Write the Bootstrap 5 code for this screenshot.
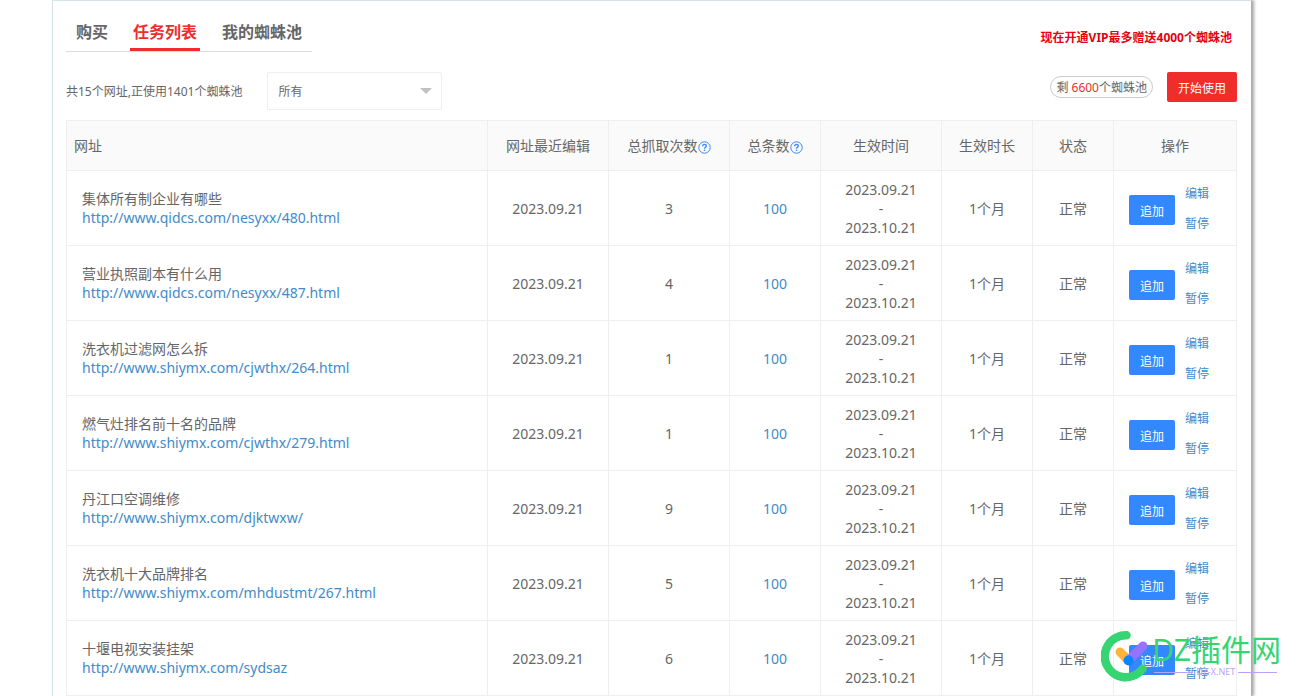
<!DOCTYPE html>
<html lang="zh-CN">
<head>
<meta charset="utf-8">
<meta name="viewport" content="width=device-width, initial-scale=1">
<title>任务列表</title>
<link href="https://cdn.jsdelivr.net/npm/bootstrap@5.3.0/dist/css/bootstrap.min.css" rel="stylesheet">
<style>
body{font-family:"Noto Sans","Noto Sans CJK SC",sans-serif;font-size:14px;line-height:19px;color:#666;background:#fff}
a{color:#428bca;text-decoration:none}
.panel{margin:0 47px 0 52px;padding:16px 14px 0 13px;min-height:100vh;border:1px solid #d7e3ea;border-right-color:#a8adb0;border-bottom:0;box-shadow:2px 0 3px rgba(0,0,0,.35)}
.tabs{border-bottom:1px solid #ddd;padding:0 7px;gap:19px}
.tabs .nav-link{color:#666;font-size:16px;font-weight:700;line-height:31px;padding:0 3px;border-bottom:3px solid transparent}
.tabs .nav-link.active{color:#ef2d2d;border-color:#ef2d2d}
.promo{font-size:12px;font-weight:700;color:#e60012;margin:11px 5px 0 0}
.tools{margin-top:20px;height:38px}
.tools,.tools .form-select{font-size:12px}
.tools .form-select{width:175px;height:38px;margin-left:25px;padding:1px 10px 0;color:#666;border:1px solid #eee;border-radius:2px;background:#fff url("data:image/svg+xml,%3Csvg xmlns='http://www.w3.org/2000/svg' viewBox='0 0 12 6'%3E%3Cpath fill='%23c2c2c2' d='M0 0h12L6 6z'/%3E%3C/svg%3E") no-repeat right 9px center/12px 6px}
.remain{border:1px solid #ccc;border-radius:11px;height:22px;line-height:22px;padding:0 5px;margin-right:14px}
.remain span{color:#ef2d2d}
.btn-start,.btn-add{height:30px;padding:3px 10px 0;font-size:12px;line-height:27px;color:#fff;border:0;border-radius:2px}
.btn-start,.btn-start:hover{background:#ef2d2d;color:#fff;width:70px}
.btn-add,.btn-add:hover{background:#38f;color:#fff;width:46px}
.tasks{table-layout:fixed;margin:10px 0 0;color:#666;border-color:#eee;border-collapse:collapse;text-align:center;vertical-align:middle;--bs-table-color:#666;--bs-table-bg:#fff}
.tasks th,.tasks td{padding:0;border:1px solid #eee;vertical-align:middle}
.tasks th{height:50px;background:#fafafa;font-weight:400}
.tasks td{height:75px}
.tasks th:first-child{text-align:left;padding-left:7px}
.tasks td:first-child{text-align:left;padding-left:15px}
.tasks td:first-child a{display:block}
.w-date{width:121px}.w-num{width:91px}.w-state{width:81px}.w-act{width:123px}
.help{width:13px;height:13px;vertical-align:-3px}
.acts{gap:10px;padding-left:15px}
.acts .btn-add{margin-top:3px}
.acts div{font-size:12px;gap:11px}
.stamp{position:absolute;right:18px;top:630px;pointer-events:none}
.stamp svg{width:48px;height:52px}
.stamp-name{font-size:30px;line-height:40px;color:#36d572;margin-left:3px}
.stamp-sub{font-size:9px;line-height:10px;color:#b9a2fb;gap:3px;margin-left:5px;margin-top:-3px}
.stamp-sub i{height:1px;background:#b9a2fb;width:39px}
</style>
</head>
<body>
<main class="panel">
  <header class="d-flex justify-content-between align-items-start">
    <nav class="tabs d-flex">
      <a class="nav-link" href="#">购买</a>
      <a class="nav-link active" href="#" aria-current="page">任务列表</a>
      <a class="nav-link" href="#">我的蜘蛛池</a>
    </nav>
    <div class="promo">现在开通VIP最多赠送4000个蜘蛛池</div>
  </header>
  <div class="tools d-flex align-items-center">
    <label for="scope">共15个网址,正使用1401个蜘蛛池</label>
    <select id="scope" class="form-select"><option>所有</option></select>
    <div class="d-flex align-items-center ms-auto align-self-start">
      <div class="remain">剩 <span>6600</span>个蜘蛛池</div>
      <button type="button" class="btn btn-start">开始使用</button>
    </div>
  </div>
  <table class="table tasks">
    <colgroup><col><col class="w-date"><col class="w-date"><col class="w-num"><col class="w-date"><col class="w-num"><col class="w-state"><col class="w-act"></colgroup>
    <thead>
      <tr>
        <th scope="col">网址</th><th scope="col">网址最近编辑</th>
        <th scope="col">总抓取次数<svg class="help" viewBox="0 0 13 13" fill="none" stroke="#38f"><circle cx="6.500" cy="6.500" r="5.700"/><path stroke-width="1.400" d="M4.700 5.300C4.700 2.700 8.400 2.800 8.300 5 8.200 6.300 6.500 6.200 6.500 7.800M6.500 8.700v1.400"/></svg></th>
        <th scope="col">总条数<svg class="help" viewBox="0 0 13 13" fill="none" stroke="#38f"><circle cx="6.500" cy="6.500" r="5.700"/><path stroke-width="1.400" d="M4.700 5.300C4.700 2.700 8.400 2.800 8.300 5 8.200 6.300 6.500 6.200 6.500 7.800M6.500 8.700v1.400"/></svg></th>
        <th scope="col">生效时间</th><th scope="col">生效时长</th><th scope="col">状态</th><th scope="col">操作</th>
      </tr>
    </thead>
    <tbody>
      <tr>
        <td>集体所有制企业有哪些<a href="#">http://www.qidcs.com/nesyxx/480.html</a></td><td>2023.09.21</td><td>3</td><td><a href="#">100</a></td><td>2023.09.21<br>-<br>2023.10.21</td><td>1个月</td><td>正常</td>
        <td><div class="acts d-flex align-items-center"><button type="button" class="btn btn-add">追加</button><div class="d-flex flex-column"><a href="#">编辑</a><a href="#">暂停</a></div></div></td>
      </tr>
      <tr>
        <td>营业执照副本有什么用<a href="#">http://www.qidcs.com/nesyxx/487.html</a></td><td>2023.09.21</td><td>4</td><td><a href="#">100</a></td><td>2023.09.21<br>-<br>2023.10.21</td><td>1个月</td><td>正常</td>
        <td><div class="acts d-flex align-items-center"><button type="button" class="btn btn-add">追加</button><div class="d-flex flex-column"><a href="#">编辑</a><a href="#">暂停</a></div></div></td>
      </tr>
      <tr>
        <td>洗衣机过滤网怎么拆<a href="#">http://www.shiymx.com/cjwthx/264.html</a></td><td>2023.09.21</td><td>1</td><td><a href="#">100</a></td><td>2023.09.21<br>-<br>2023.10.21</td><td>1个月</td><td>正常</td>
        <td><div class="acts d-flex align-items-center"><button type="button" class="btn btn-add">追加</button><div class="d-flex flex-column"><a href="#">编辑</a><a href="#">暂停</a></div></div></td>
      </tr>
      <tr>
        <td>燃气灶排名前十名的品牌<a href="#">http://www.shiymx.com/cjwthx/279.html</a></td><td>2023.09.21</td><td>1</td><td><a href="#">100</a></td><td>2023.09.21<br>-<br>2023.10.21</td><td>1个月</td><td>正常</td>
        <td><div class="acts d-flex align-items-center"><button type="button" class="btn btn-add">追加</button><div class="d-flex flex-column"><a href="#">编辑</a><a href="#">暂停</a></div></div></td>
      </tr>
      <tr>
        <td>丹江口空调维修<a href="#">http://www.shiymx.com/djktwxw/</a></td><td>2023.09.21</td><td>9</td><td><a href="#">100</a></td><td>2023.09.21<br>-<br>2023.10.21</td><td>1个月</td><td>正常</td>
        <td><div class="acts d-flex align-items-center"><button type="button" class="btn btn-add">追加</button><div class="d-flex flex-column"><a href="#">编辑</a><a href="#">暂停</a></div></div></td>
      </tr>
      <tr>
        <td>洗衣机十大品牌排名<a href="#">http://www.shiymx.com/mhdustmt/267.html</a></td><td>2023.09.21</td><td>5</td><td><a href="#">100</a></td><td>2023.09.21<br>-<br>2023.10.21</td><td>1个月</td><td>正常</td>
        <td><div class="acts d-flex align-items-center"><button type="button" class="btn btn-add">追加</button><div class="d-flex flex-column"><a href="#">编辑</a><a href="#">暂停</a></div></div></td>
      </tr>
      <tr>
        <td>十堰电视安装挂架<a href="#">http://www.shiymx.com/sydsaz</a></td><td>2023.09.21</td><td>6</td><td><a href="#">100</a></td><td>2023.09.21<br>-<br>2023.10.21</td><td>1个月</td><td>正常</td>
        <td><div class="acts d-flex align-items-center"><button type="button" class="btn btn-add">追加</button><div class="d-flex flex-column"><a href="#">编辑</a><a href="#">暂停</a></div></div></td>
      </tr>
    </tbody>
  </table>
</main>
<div class="stamp d-flex align-items-start">
  <svg viewBox="0 0 48 52" fill="none" stroke-linecap="round">
    <path stroke="#36d572" stroke-width="8.500" d="M25.500 5.300A21 21 0 1 0 41.500 39"/>
    <path stroke="#ffb53c" stroke-width="9" d="M19 22l8 8"/>
    <path stroke="#9673ff" stroke-width="9" d="M42 16L28 30"/>
    <circle cx="27.500" cy="30.500" r="5" fill="#0a84ff"/>
  </svg>
  <div>
    <div class="stamp-name">DZ插件网</div>
    <div class="stamp-sub d-flex align-items-center"><i></i><span>DZ-X.NET</span><i></i></div>
  </div>
</div>
<script src="https://cdn.jsdelivr.net/npm/bootstrap@5.3.0/dist/js/bootstrap.bundle.min.js"></script>
</body>
</html>
